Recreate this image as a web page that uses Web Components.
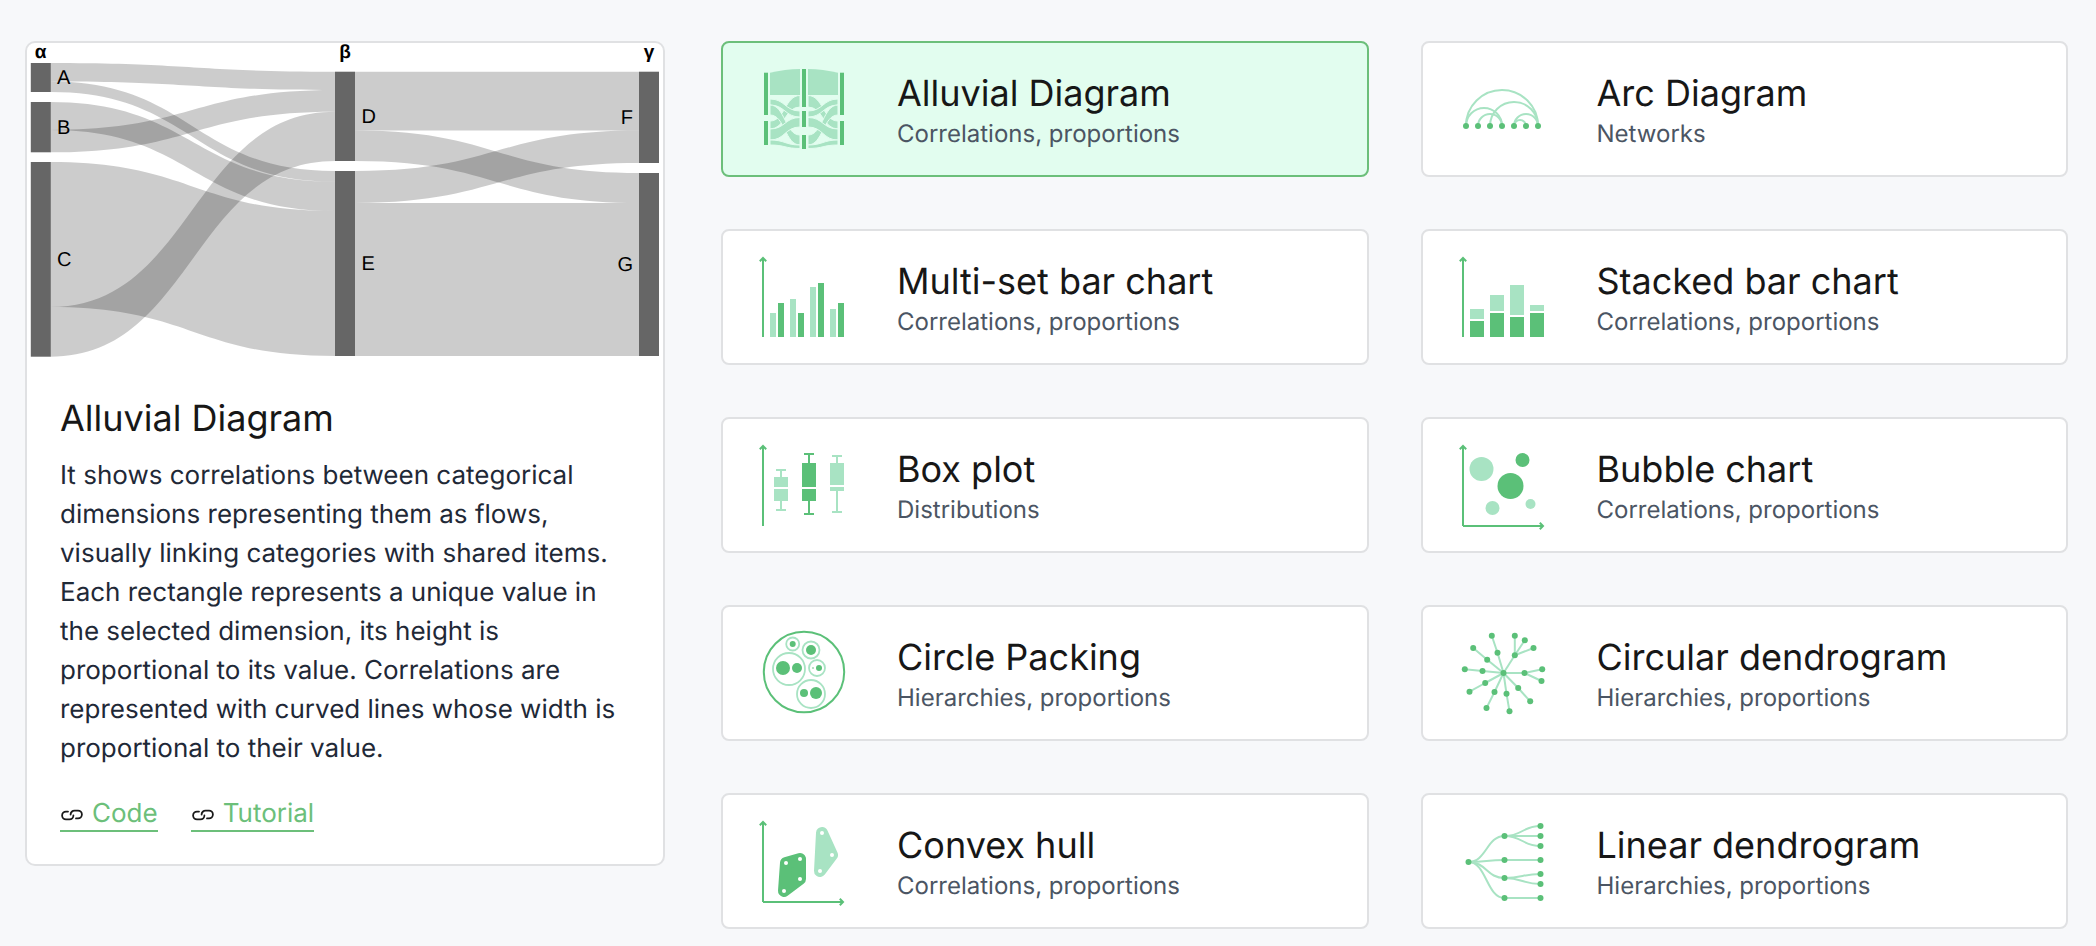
<!DOCTYPE html>
<html lang="en">
<head>
<meta charset="utf-8">
<title>Charts</title>
<style>
  html, body { margin: 0; padding: 0; background: #f7f8fa; overflow: hidden; }
</style>
</head>
<body>
<chart-page>
  <info-panel slot="info">
    <sankey-chart slot="chart"></sankey-chart>
    <span slot="title">Alluvial Diagram</span>
    It shows correlations between categorical dimensions representing them as flows, visually linking categories with shared items. Each rectangle represents a unique value in the selected dimension, its height is proportional to its value. Correlations are represented with curved lines whose width is proportional to their value.
    <link-chip slot="links">Code</link-chip>
    <link-chip slot="links">Tutorial</link-chip>
  </info-panel>
  <chart-card icon="alluvial" active>Alluvial Diagram<span slot="tags">Correlations, proportions</span></chart-card>
  <chart-card icon="arc">Arc Diagram<span slot="tags">Networks</span></chart-card>
  <chart-card icon="multiset">Multi-set bar chart<span slot="tags">Correlations, proportions</span></chart-card>
  <chart-card icon="stacked">Stacked bar chart<span slot="tags">Correlations, proportions</span></chart-card>
  <chart-card icon="box">Box plot<span slot="tags">Distributions</span></chart-card>
  <chart-card icon="bubble">Bubble chart<span slot="tags">Correlations, proportions</span></chart-card>
  <chart-card icon="packing">Circle Packing<span slot="tags">Hierarchies, proportions</span></chart-card>
  <chart-card icon="circular">Circular dendrogram<span slot="tags">Hierarchies, proportions</span></chart-card>
  <chart-card icon="hull">Convex hull<span slot="tags">Correlations, proportions</span></chart-card>
  <chart-card icon="linear">Linear dendrogram<span slot="tags">Hierarchies, proportions</span></chart-card>
</chart-page>

<script>
const DARK = '#5bc078'
const LIGHT = '#a8e3c3'

const rect = (x, y, w, h, fill) => `<rect x="${x}" y="${y}" width="${w}" height="${h}" fill="${fill}"/>`
const dot = (x, y, r, fill = DARK) => `<circle cx="${x}" cy="${y}" r="${r}" fill="${fill}"/>`
const ring = (x, y, r) => `<circle cx="${x}" cy="${y}" r="${r}" fill="none" stroke="${LIGHT}" stroke-width="1.8"/>`
const line = (x1, y1, x2, y2, stroke = LIGHT, w = 2) =>
  `<line x1="${x1}" y1="${y1}" x2="${x2}" y2="${y2}" stroke="${stroke}" stroke-width="${w}"/>`

const axisY = (h = 80) => line(0, 1, 0, h, DARK, 2) +
  `<path d="M-3.2 4.2 L0 1 L3.2 4.2" fill="none" stroke="${DARK}" stroke-width="2"/>`
const axisX = `<path d="M0 81 H80" stroke="${DARK}" stroke-width="2" fill="none"/>` +
  `<path d="M76.8 77.8 L80 81 L76.8 84.2" fill="none" stroke="${DARK}" stroke-width="2"/>`

const arc = (a, b) => {
  const r = (b - a) / 2
  return `<path d="M${a} 57 A${r} ${r} 0 0 1 ${b} 57" fill="none" stroke="${LIGHT}" stroke-width="2"/>`
}

const band = (x0, a0, b0, x1, a1, b1) => {
  const m = (x0 + x1) / 2
  return `<path d="M${x0} ${a0} C${m} ${a0} ${m} ${a1} ${x1} ${a1} L${x1} ${b1} C${m} ${b1} ${m} ${b0} ${x0} ${b0} Z" ` +
    `fill="${LIGHT}" stroke="#e2fdef" stroke-width="1"/>`
}

const curve = (x0, y0, x1, y1) => {
  const m = (x0 + x1) / 2
  return `<path d="M${x0} ${y0} C${m} ${y0} ${m} ${y1} ${x1} ${y1}" fill="none" stroke="${LIGHT}" stroke-width="2"/>`
}

const box = (x, top, bottom, capTop, capBottom, cut0, cut1, fill) => {
  const c = x + 7
  return line(c, capTop, c, top, fill, 2) + line(c - 5, capTop, c + 5, capTop, fill, 2) +
    line(c, bottom, c, capBottom, fill, 2) + line(c - 5, capBottom, c + 5, capBottom, fill, 2) +
    rect(x, top, 14, cut0 - top, fill) + rect(x, cut1, 14, bottom - cut1, fill)
}

const radial = [
  [34.5, 19.7, [[28.8, 2.7]]],
  [51.8, 22.3, [[51.8, 2.7], [61.8, 7.3], [70.5, 15]]],
  [24.2, 26.7, [[10.2, 15]]],
  [19.5, 38, [[1.8, 36.3]]],
  [22.2, 50, [[6.5, 58.7]]],
  [31.5, 59, [[23.5, 75]]],
  [43.5, 60.7, [[46.5, 78.3]]],
  [55.2, 55, [[67.2, 68.3]]],
  [61.5, 40, [[79.2, 36.3], [78.5, 48]]]
]

const tree = [
  [15, [5, 15, 25]],
  [39, [39]],
  [57, [53, 63]],
  [77, [77]]
]

// five flows on each side of the middle bar, the right side mirrors the left
const iconFlows = [
  [52, 60, 26.5, 38],
  [30, 36, 42, 48],
  [36, 46, 66, 76],
  [60, 71, 48.5, 58],
  [71, 76, 76, 79.5]
]

const ICONS = {
  alluvial:
    `<path d="M7 3.7 C17 1.5 27 0 37 0 V26 H7 Z" fill="${LIGHT}"/>` +
    `<path d="M45 0 C55 0 65 1.5 75 3.7 V26 H45 Z" fill="${LIGHT}"/>` +
    iconFlows.map(f => band(7, f[0], f[1], 37, f[2], f[3]) + band(45, f[2], f[3], 75, f[0], f[1])).join('') +
    rect(1, 3.7, 4, 42.3, DARK) + rect(1, 52, 4, 24, DARK) +
    rect(39, 0, 4, 38, DARK) + rect(39, 42, 4, 16, DARK) + rect(39, 66, 4, 14, DARK) +
    rect(77, 3.7, 4, 42.3, DARK) + rect(77, 52, 4, 24, DARK),
  arc:
    arc(3, 75) + arc(3, 39) + arc(15, 39) + arc(27, 75) + arc(51, 75) + arc(51, 63) +
    [3, 15, 27, 39, 51, 63, 75].map(x => dot(x, 57, 3)).join(''),
  multiset:
    axisY() +
    [[7, 56, LIGHT], [15, 46, DARK], [27, 42, LIGHT], [35, 56, DARK], [47, 30, LIGHT], [55, 26, DARK], [67, 52, LIGHT], [75, 46, DARK]]
      .map(([x, y, c]) => rect(x, y, 6, 80 - y, c)).join(''),
  stacked:
    axisY() +
    rect(7, 64, 14, 16, DARK) + rect(7, 52, 14, 10, LIGHT) +
    rect(27, 56, 14, 24, DARK) + rect(27, 38, 14, 16, LIGHT) +
    rect(47, 60, 14, 20, DARK) + rect(47, 28, 14, 30, LIGHT) +
    rect(67, 56, 14, 24, DARK) + rect(67, 48, 14, 6, LIGHT),
  box:
    axisY(81) +
    box(11, 32, 56, 25, 65, 42, 44, LIGHT) +
    box(39, 18, 56, 9, 69, 42, 44, DARK) +
    box(67, 18, 46, 11, 67, 40, 42, LIGHT),
  bubble:
    axisY(81) + axisX +
    dot(18.5, 24, 12, LIGHT) + dot(59.5, 15, 7) + dot(47.5, 41, 13) + dot(29.5, 63, 7, LIGHT) + dot(67.5, 59, 5, LIGHT),
  packing:
    `<circle cx="41" cy="39" r="40.2" fill="none" stroke="${DARK}" stroke-width="2"/>` +
    ring(29.7, 11, 6.5) + dot(29.7, 11, 3) +
    ring(48, 17, 8.5) + dot(48, 17, 5) +
    ring(26, 36, 16) + dot(20, 35, 7) + dot(34, 35, 5) +
    ring(54, 35, 8) + dot(56, 35, 3) + dot(50, 35, 0.8) +
    ring(48, 61, 14) + dot(41, 60, 4) + dot(53, 60, 6),
  circular:
    radial.map(([x, y, kids]) => line(40.5, 40, x, y) + kids.map(k => line(x, y, k[0], k[1])).join('')).join('') +
    radial.map(([x, y, kids]) => dot(x, y, 3) + kids.map(k => dot(k[0], k[1], 3)).join('')).join('') +
    dot(40.5, 40, 3),
  hull:
    axisY(81) + axisX +
    `<polygon points="23,42 37,38 37,58 21,70" fill="${DARK}" stroke="${DARK}" stroke-width="12" stroke-linejoin="round"/>` +
    `<polygon points="59,12 69,34 57,50" fill="${LIGHT}" stroke="${LIGHT}" stroke-width="12" stroke-linejoin="round"/>` +
    [[23, 42], [37, 38], [37, 58], [21, 70], [59, 12], [69, 34], [57, 50]].map(p => dot(p[0], p[1], 2, '#fff')).join(''),
  linear:
    tree.map(([y, kids]) => curve(5.5, 41, 41.5, y) + kids.map(k => curve(41.5, y, 77.5, k)).join('')).join('') +
    dot(5.5, 41, 3) +
    tree.map(([y, kids]) => dot(41.5, y, 3) + kids.map(k => dot(77.5, k, 3)).join('')).join('')
}

class ChartPage extends HTMLElement {
  constructor(){
    super()
    this.attachShadow({mode: 'open'}).innerHTML = `
      <style>
        :host {
          display: grid;
          grid-template-columns: 640px 1fr;
          column-gap: 56px;
          padding: 41px 28px 0 25px;
          align-items: start;
          font-family: Inter, "Liberation Sans", sans-serif;
          text-rendering: geometricPrecision;
        }
        .cards {
          display: grid;
          grid-template-columns: 1fr 1fr;
          gap: 52px;
        }
      </style>
      <slot name="info"></slot>
      <div class="cards"><slot></slot></div>
    `
  }
}

class InfoPanel extends HTMLElement {
  constructor(){
    super()
    this.attachShadow({mode: 'open'}).innerHTML = `
      <style>
        :host {
          display: block;
          box-sizing: border-box;
          height: 825px;
          background: #fff;
          border: 2px solid #e0e1e3;
          border-radius: 10px;
        }
        .text { padding: 31px 32px 0 33px; }
        h2 {
          margin: 0 0 16px;
          font-size: 36px;
          line-height: 44px;
          font-weight: 400;
          color: #171717;
        }
        p {
          margin: 0;
          font-size: 26px;
          line-height: 39px;
          color: #1f2937;
        }
        .links {
          display: flex;
          gap: 33px;
          margin-top: 29px;
        }
      </style>
      <slot name="chart"></slot>
      <div class="text">
        <h2><slot name="title"></slot></h2>
        <p><slot></slot></p>
        <div class="links"><slot name="links"></slot></div>
      </div>
    `
  }
}

class LinkChip extends HTMLElement {
  constructor(){
    super()
    this.attachShadow({mode: 'open'}).innerHTML = `
      <style>
        :host {
          display: inline-flex;
          align-items: center;
          gap: 8px;
          font-size: 26px;
          line-height: 33px;
          color: #6cbf7a;
          border-bottom: 2px solid #6cbf7a;
        }
        svg { display: block; margin-top: 3px; }
      </style>
      <svg width="24" height="12" viewBox="0 0 24 12" fill="none" stroke="#1a1a1a" stroke-width="1.8" stroke-linecap="round">
        <path d="M8 2.6 H6 A3.9 3.9 0 0 0 6 10.4 H9.5 A3.9 3.9 0 0 0 13.4 6.5"/>
        <path d="M16 9.4 H18 A3.9 3.9 0 0 0 18 1.6 H14.5 A3.9 3.9 0 0 0 10.6 5.5"/>
      </svg>
      <slot></slot>
    `
  }
}

class ChartCard extends HTMLElement {
  constructor(){
    super()
    this.attachShadow({mode: 'open'}).innerHTML = `
      <style>
        :host {
          display: flex;
          align-items: center;
          box-sizing: border-box;
          height: 136px;
          padding-left: 36px;
          gap: 50px;
          background: #fff;
          border: 2px solid #e0e1e3;
          border-radius: 8px;
        }
        :host([active]) {
          background: #e2fdef;
          border-color: #6cbf7a;
        }
        svg { display: block; flex: none; overflow: visible; }
        .text { margin-top: 3px; }
        .name {
          font-size: 36px;
          line-height: 44px;
          color: #171717;
        }
        .tags {
          margin-top: 3px;
          font-size: 24px;
          line-height: 32px;
          color: #4b5563;
        }
      </style>
      <svg width="88" height="88" viewBox="-4 -4 88 88"></svg>
      <div class="text">
        <div class="name"><slot></slot></div>
        <div class="tags"><slot name="tags"></slot></div>
      </div>
    `
  }

  connectedCallback(){
    this.shadowRoot.querySelector('svg').innerHTML = ICONS[this.getAttribute('icon')] || ''
  }
}

// nodes and flows are in page pixels, the viewBox starts at the inside of the panel
const link = (x0, a0, b0, x1, a1, b1) => {
  const m = (x0 + x1) / 2
  return `<path d="M${x0} ${a0} C${m} ${a0} ${m} ${a1} ${x1} ${a1} L${x1} ${b1} C${m} ${b1} ${m} ${b0} ${x0} ${b0} Z"/>`
}

class SankeyChart extends HTMLElement {
  constructor(){
    super()
    const X0 = 50.4, X1 = 335, X2 = 355, X3 = 639
    const flows = [
      [X0, 63, 81.5, X1, 71.7, 90],
      [X0, 81.5, 92, X1, 171, 181.7],
      [X0, 102, 130, X1, 181.7, 211],
      [X0, 130, 152.3, X1, 90, 111.7],
      [X0, 162, 307, X1, 211, 356],
      [X0, 307, 356.7, X1, 111.7, 161],
      [X2, 71.7, 130.5, X3, 71.7, 130.5],
      [X2, 130.5, 161, X3, 173, 203],
      [X2, 171, 203, X3, 130.5, 163],
      [X2, 203, 356, X3, 203, 356]
    ]
    const nodes = [
      [30.8, 63, 92], [30.8, 102, 152.3], [30.8, 162, 356.7],
      [335, 71.7, 161], [335, 171, 356],
      [639, 71.7, 163], [639, 173, 356]
    ]
    const labels = [
      ['A', 57, 84, 'start'], ['B', 57, 134, 'start'], ['C', 57, 266, 'start'],
      ['D', 361.6, 123, 'start'], ['E', 361.6, 270, 'start'],
      ['F', 633, 124, 'end'], ['G', 633, 271, 'end']
    ]
    const heads = [['α', 40.6], ['β', 345], ['γ', 649]]
    this.attachShadow({mode: 'open'}).innerHTML = `
      <style>
        :host { display: block; }
        svg { display: block; margin-top: -3px; overflow: visible; font-family: "Liberation Sans", Arial, sans-serif; }
        .flows { fill: #000; fill-opacity: .2; }
        .label { font-size: 20px; fill: #000; }
        .head { font-size: 19px; font-weight: 700; fill: #000; text-anchor: middle; }
      </style>
      <svg width="636" height="325" viewBox="27 40 636 325">
        <g class="flows">${flows.map(f => link(...f)).join('')}</g>
        ${nodes.map(n => rect(n[0], n[1], 20, n[2] - n[1], '#666')).join('')}
        ${labels.map(l => `<text class="label" x="${l[1]}" y="${l[2]}" text-anchor="${l[3]}">${l[0]}</text>`).join('')}
        ${heads.map(h => `<text class="head" x="${h[1]}" y="58">${h[0]}</text>`).join('')}
      </svg>
    `
  }
}

customElements.define('chart-page', ChartPage)
customElements.define('info-panel', InfoPanel)
customElements.define('link-chip', LinkChip)
customElements.define('chart-card', ChartCard)
customElements.define('sankey-chart', SankeyChart)
</script>
</body>
</html>
